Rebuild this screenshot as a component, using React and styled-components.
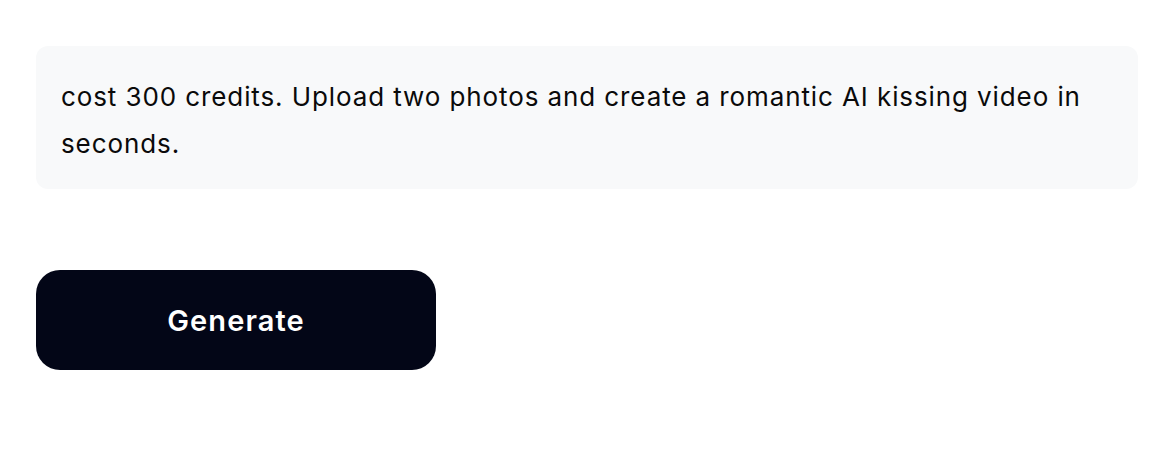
import React from "react";
import styled, { createGlobalStyle } from "styled-components";

const Global = createGlobalStyle`
  html, body { margin: 0; padding: 0; background: #ffffff; }
  body { font-family: Inter, "Noto Sans", sans-serif; -webkit-font-smoothing: antialiased; }
`;

const Page = styled.div`
  display: flex;
  flex-direction: column;
  align-items: flex-start;
  gap: 81px;
  padding: 46px 16px 0 36px;
`;

const Notice = styled.div`
  box-sizing: border-box;
  width: 100%;
  background: #f8f9fa;
  border-radius: 12px;
  padding: 27px 25px 22px;
  font-size: 26px;
  letter-spacing: 0.9px;
  line-height: 47px;
  color: #0a0a0a;
`;

const Button = styled.button`
  width: 400px;
  height: 100px;
  border: none;
  border-radius: 24px;
  background: #030617;
  color: #ffffff;
  font-family: Inter, "Noto Sans", sans-serif;
  font-size: 29px;
  letter-spacing: 1.1px;
  font-weight: 600;
  cursor: pointer;
`;

export default function App() {
  return (
    <>
      <Global />
      <Page>
        <Notice>
          cost 300 credits. Upload two photos and create a romantic AI kissing video in seconds.
        </Notice>
        <Button>Generate</Button>
      </Page>
    </>
  );
}
